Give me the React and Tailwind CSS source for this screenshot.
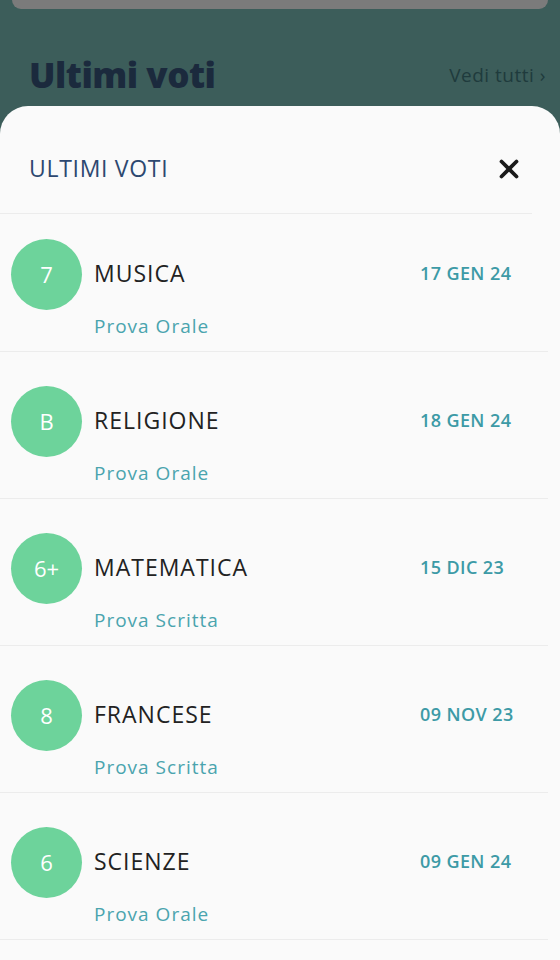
import { X } from 'lucide-react'

const grades = [
  { grade: '7', subject: 'MUSICA', date: '17 GEN 24', type: 'Prova Orale' },
  { grade: 'B', subject: 'RELIGIONE', date: '18 GEN 24', type: 'Prova Orale' },
  { grade: '6+', subject: 'MATEMATICA', date: '15 DIC 23', type: 'Prova Scritta' },
  { grade: '8', subject: 'FRANCESE', date: '09 NOV 23', type: 'Prova Scritta' },
  { grade: '6', subject: 'SCIENZE', date: '09 GEN 24', type: 'Prova Orale' },
]

export default function App() {
  return (
    <div className="w-[560px] h-[960px] overflow-hidden bg-[#3c5d5a] flex flex-col font-['Open_Sans',sans-serif]">
      {/* dimmed page behind the sheet */}
      <div className="mx-3 h-[9px] rounded-b-[10px] bg-[#7b7b7b]" />
      <div className="flex items-center justify-between pl-[29px] pr-[14px] h-[97px] pt-[36px]">
        <h1 className="text-[35px] font-extrabold tracking-[-0.5px] text-[#1b2a3d]">Ultimi voti</h1>
        <span className="text-[19px] tracking-[0.5px] text-[#1f3b3d]">Vedi tutti ›</span>
      </div>

      {/* bottom sheet */}
      <div className="flex-1 bg-[#fafafa] rounded-t-[28px]">
        <div className="flex items-center justify-between pl-[29px] pr-[8px] h-[108px] pt-[18px] border-b border-[#ececec] mr-[28px]">
          <h2 className="text-[23px] tracking-[0.7px] text-[#2d4870]">ULTIMI VOTI</h2>
          <X size={30} strokeWidth={3} className="text-[#1a1a1a]" />
        </div>
        {grades.map((g, i) => (
          <div
            key={i}
            className={`flex items-start pl-[11px] pb-[13px] border-b border-[#ececec] mr-3 ${i === 0 ? 'pt-[25px]' : 'pt-[34px]'}`}
          >
            <div className="w-[71px] h-[71px] shrink-0 rounded-full bg-[#6dd39b] flex items-center justify-center text-white text-[22px]">
              {g.grade}
            </div>
            <div className="flex-1 ml-[12px]">
              <div className="h-[71px] flex items-center pb-[3px]">
                <span className="flex-1 text-[23px] tracking-[1px] text-[#222222]">{g.subject}</span>
                <span className="w-[128px] text-[18px] font-semibold tracking-[0.4px] text-[#3d9aa6]">{g.date}</span>
              </div>
              <div className="mt-[4px] leading-[24px] text-[19px] tracking-[1px] text-[#4aa4ae]">{g.type}</div>
            </div>
          </div>
        ))}
      </div>
    </div>
  )
}
